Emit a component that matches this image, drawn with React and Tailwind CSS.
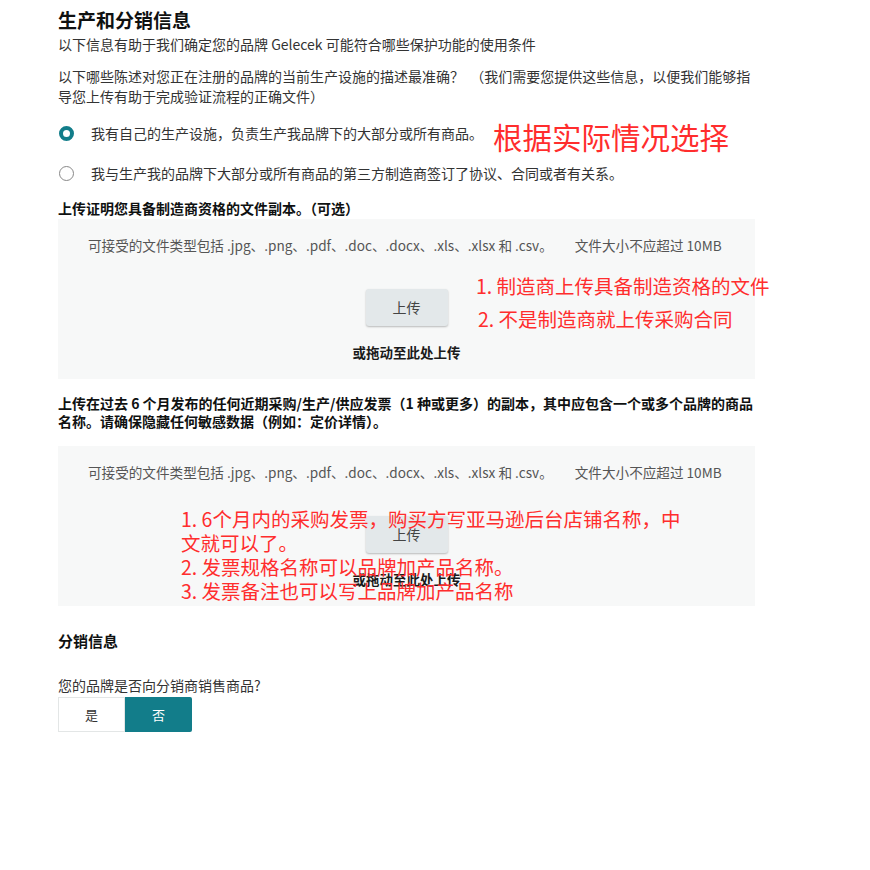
import React from 'react';

const font = { fontFamily: '"Noto Sans CJK SC", "Noto Sans", sans-serif' };

const UploadBox = ({ className = '' }) => (
    <div className={`bg-[#f7f8f8] w-[697px] h-[160px] flex flex-col items-center ${className}`}>
        <div className="w-full flex text-[13.6px] text-[#555] pl-[30px] pt-[16px] leading-[20px]">
            <span>可接受的文件类型包括 .jpg、.png、.pdf、.doc、.docx、.xls、.xlsx 和 .csv。</span>
            <span className="ml-[22px]">文件大小不应超过 10MB</span>
        </div>
        <button className="mt-[34px] w-[82px] h-[37px] rounded-[3px] bg-[#e3e8ea] shadow-[0_1px_2px_rgba(0,0,0,0.25)] text-[14px] text-[#444]">
            上传
        </button>
        <div className="mt-[16px] text-[13.5px] font-bold text-[#1a1a1a]">或拖动至此处上传</div>
    </div>
);

export default function App() {
    return (
        <div className="relative w-[870px] h-[870px] bg-white overflow-hidden" style={font}>
            <div className="pl-[58px] pt-[8px] text-[#0f1111]">
                <h1 className="text-[19px] font-bold leading-[24px]">生产和分销信息</h1>
                <p className="mt-[2px] text-[14px] text-[#333] leading-[20px]">
                    以下信息有助于我们确定您的品牌 Gelecek 可能符合哪些保护功能的使用条件
                </p>
                <p className="mt-[12px] w-[700px] text-[14px] text-[#333] leading-[20px]">
                    以下哪些陈述对您正在注册的品牌的当前生产设施的描述最准确？ &nbsp;（我们需要您提供这些信息，以便我们能够指导您上传有助于完成验证流程的正确文件）
                </p>

                <div className="mt-[16px] flex items-center h-[22px] text-[14px] text-[#333]">
                    <span className="w-[15px] h-[15px] rounded-full border-[4px] border-[#127d8a] bg-white ml-[1px]" />
                    <span className="ml-[17px]">我有自己的生产设施，负责生产我品牌下的大部分或所有商品。</span>
                </div>
                <div className="mt-[18px] flex items-center h-[22px] text-[14px] text-[#333]">
                    <span className="w-[15px] h-[15px] rounded-full border border-[#888] bg-white ml-[1px]" />
                    <span className="ml-[17px]">我与生产我的品牌下大部分或所有商品的第三方制造商签订了协议、合同或者有关系。</span>
                </div>

                <h2 className="mt-[14px] text-[14px] font-bold leading-[20px]">上传证明您具备制造商资格的文件副本。（可选）</h2>
                <UploadBox className="mt-[1px]" />

                <h2 className="mt-[15px] w-[695px] text-[14px] font-bold leading-[18px]">
                    上传在过去 6 个月发布的任何近期采购/生产/供应发票（1 种或更多）的副本，其中应包含一个或多个品牌的商品名称。请确保隐藏任何敏感数据（例如：定价详情）。
                </h2>
                <UploadBox className="mt-[16px]" />

                <h2 className="mt-[24px] text-[15px] font-bold leading-[22px]">分销信息</h2>
                <p className="mt-[23px] text-[14px] text-[#333] leading-[20px]">您的品牌是否向分销商销售商品?</p>
                <div className="flex mt-[2px]">
                    <button className="w-[67px] h-[35px] bg-white border border-[#e3e6e6] text-[13px] text-[#333]">是</button>
                    <button className="w-[67px] h-[35px] bg-[#127d8a] text-[13px] text-white rounded-r-[2px]">否</button>
                </div>
            </div>

            {/* red notes laid over the screenshot */}
            <div className="absolute left-[493px] top-[115px] text-[29.5px] leading-[42px] text-[#ff2d2d]">根据实际情况选择</div>
            <div className="absolute left-[476px] top-[269px] text-[19.5px] leading-[33px] text-[#ff2d2d]">
                <div>1. 制造商上传具备制造资格的文件</div>
                <div className="ml-[2px]">2. 不是制造商就上传采购合同</div>
            </div>
            <div className="absolute left-[181px] top-[507px] w-[540px] text-[19.5px] leading-[24px] text-[#ff2d2d]">
                <div>1. 6个月内的采购发票，购买方写亚马逊后台店铺名称，中</div>
                <div>文就可以了。</div>
                <div>2. 发票规格名称可以品牌加产品名称。</div>
                <div>3. 发票备注也可以写上品牌加产品名称</div>
            </div>
        </div>
    );
}
